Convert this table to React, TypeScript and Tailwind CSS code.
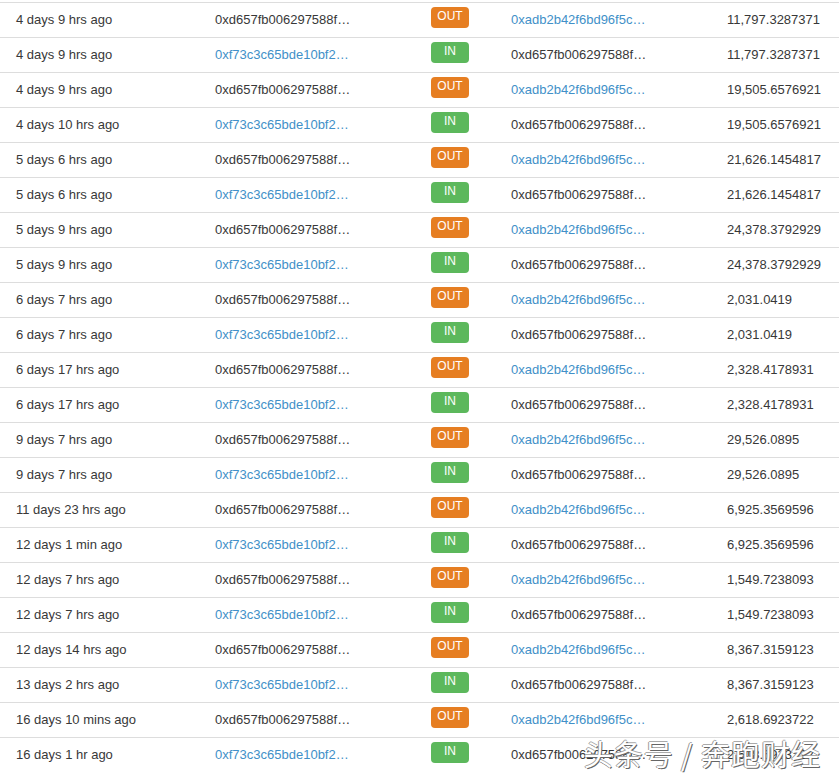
const rows: [string, "OUT" | "IN", string][] = [
  ["4 days 9 hrs ago", "OUT", "11,797.3287371"],
  ["4 days 9 hrs ago", "IN", "11,797.3287371"],
  ["4 days 9 hrs ago", "OUT", "19,505.6576921"],
  ["4 days 10 hrs ago", "IN", "19,505.6576921"],
  ["5 days 6 hrs ago", "OUT", "21,626.1454817"],
  ["5 days 6 hrs ago", "IN", "21,626.1454817"],
  ["5 days 9 hrs ago", "OUT", "24,378.3792929"],
  ["5 days 9 hrs ago", "IN", "24,378.3792929"],
  ["6 days 7 hrs ago", "OUT", "2,031.0419"],
  ["6 days 7 hrs ago", "IN", "2,031.0419"],
  ["6 days 17 hrs ago", "OUT", "2,328.4178931"],
  ["6 days 17 hrs ago", "IN", "2,328.4178931"],
  ["9 days 7 hrs ago", "OUT", "29,526.0895"],
  ["9 days 7 hrs ago", "IN", "29,526.0895"],
  ["11 days 23 hrs ago", "OUT", "6,925.3569596"],
  ["12 days 1 min ago", "IN", "6,925.3569596"],
  ["12 days 7 hrs ago", "OUT", "1,549.7238093"],
  ["12 days 7 hrs ago", "IN", "1,549.7238093"],
  ["12 days 14 hrs ago", "OUT", "8,367.3159123"],
  ["13 days 2 hrs ago", "IN", "8,367.3159123"],
  ["16 days 10 mins ago", "OUT", "2,618.6923722"],
  ["16 days 1 hr ago", "IN", "2,618.6923722"],
];

const ME = "0xd657fb006297588f…";
const FROM = "0xf73c3c65bde10bf2…";
const TO = "0xadb2b42f6bd96f5c…";

function Addr({ text, link }: { text: string; link: boolean }) {
  return <span className={link ? "text-[#4190c8]" : "text-[#383838]"}>{text}</span>;
}

export default function App() {
  return (
    <main className="relative w-[839px] h-[776px] bg-white overflow-hidden pt-[2px] font-['Liberation_Sans',Arial,sans-serif] text-[13px] text-[#383838]">
      {rows.map(([age, dir, value], i) => {
        const out = dir === "OUT";
        return (
          <div key={i} className="flex h-[35px] items-center border-t border-[#ddd]">
            <div className="w-[215px] pl-[16px]">{age}</div>
            <div className="w-[216px]">
              <Addr text={out ? ME : FROM} link={!out} />
            </div>
            <div className="w-[80px] flex">
              <span
                className={`mb-[6px] inline-flex h-[21px] w-[38px] items-center justify-center rounded-[4px] pb-[2px] text-[12px] text-white ${
                  out ? "bg-[#e67e22]" : "bg-[#5cb85c]"
                }`}
              >
                {dir}
              </span>
            </div>
            <div className="w-[216px]">
              <Addr text={out ? TO : ME} link={out} />
            </div>
            <div className="flex-1">{value}</div>
          </div>
        );
      })}

      {/* watermark */}
      <div className="absolute right-[18px] bottom-[8px] font-['Noto_Sans_CJK_SC',sans-serif] text-[29px] leading-none tracking-[1px] text-white [text-shadow:1px_1px_0_#666,-1px_0_0_#999,0_-1px_0_#aaa]">
        头条号 / 奔跑财经
      </div>
    </main>
  );
}
